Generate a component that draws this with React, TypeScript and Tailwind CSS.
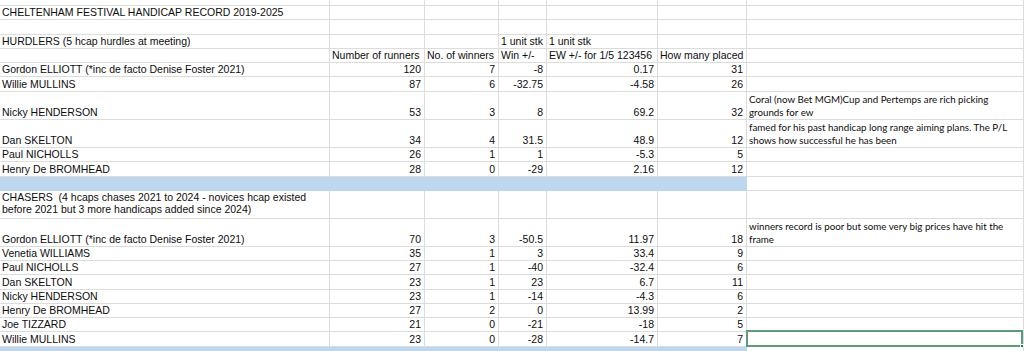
import React from "react";

type Cell = { t?: string; lines?: string[]; r?: boolean; notes?: boolean; wrap?: boolean };
type Row = { h: number; cells: (Cell | null)[]; blue?: boolean; selected?: boolean };

const W = ["w-[330px]", "w-[95px]", "w-[74px]", "w-[48px]", "w-[111px]", "w-[89px]", "w-[277px]"];

const n = (v: string): Cell => ({ t: v, r: true });
const l = (v: string): Cell => ({ t: v });

const dataRow = (h: number, name: string, a: string, b: string, c: string, d: string, e: string, note?: string[]): Row => ({
  h,
  cells: [l(name), n(a), n(b), n(c), n(d), n(e), note ? { lines: note, notes: true } : null],
});

const rows: Row[] = [
  { h: 6, cells: [] },
  { h: 14, cells: [l("CHELTENHAM FESTIVAL HANDICAP RECORD 2019-2025")] },
  { h: 15, cells: [] },
  { h: 14, cells: [l("HURDLERS (5 hcap hurdles at meeting)"), null, null, l("1 unit stk"), l("1 unit stk")] },
  {
    h: 14,
    cells: [null, l("Number of runners"), l("No. of winners"), l("Win +/-"), l("EW +/- for 1/5 123456"), l("How many placed")],
  },
  dataRow(14, "Gordon ELLIOTT (*inc de facto Denise Foster 2021)", "120", "7", "-8", "0.17", "31"),
  dataRow(15, "Willie MULLINS", "87", "6", "-32.75", "-4.58", "26"),
  dataRow(28, "Nicky HENDERSON", "53", "3", "8", "69.2", "32", [
    "Coral (now Bet MGM)Cup and Pertemps are rich picking",
    "grounds for ew",
  ]),
  dataRow(28, "Dan SKELTON", "34", "4", "31.5", "48.9", "12", [
    "famed for his past handicap long range aiming plans. The P/L",
    "shows how successful he has been",
  ]),
  dataRow(14, "Paul NICHOLLS", "26", "1", "1", "-5.3", "5"),
  dataRow(15, "Henry De BROMHEAD", "28", "0", "-29", "2.16", "12"),
  { h: 14, cells: [], blue: true },
  {
    h: 28,
    cells: [
      {
        lines: [
          "CHASERS  (4 hcaps chases 2021 to 2024 - novices hcap existed",
          "before 2021 but 3 more handicaps added since 2024)",
        ],
        wrap: true,
      },
    ],
  },
  dataRow(28, "Gordon ELLIOTT (*inc de facto Denise Foster 2021)", "70", "3", "-50.5", "11.97", "18", [
    "winners record is poor but some very big prices have hit the",
    "frame",
  ]),
  dataRow(14, "Venetia WILLIAMS", "35", "1", "3", "33.4", "9"),
  dataRow(14, "Paul NICHOLLS", "27", "1", "-40", "-32.4", "6"),
  dataRow(15, "Dan SKELTON", "23", "1", "23", "6.7", "11"),
  dataRow(14, "Nicky HENDERSON", "23", "1", "-14", "-4.3", "6"),
  dataRow(14, "Henry De BROMHEAD", "27", "2", "0", "13.99", "2"),
  dataRow(14, "Joe TIZZARD", "21", "0", "-21", "-18", "5"),
  { ...dataRow(15, "Willie MULLINS", "23", "0", "-28", "-14.7", "7"), selected: true },
  { h: 10, cells: [], blue: true },
];

function CellView({ cell, col, row }: { cell: Cell | null; col: number; row: Row }) {
  const blue = row.blue && col < 6;
  const base = `${W[col]} shrink-0 h-full relative flex items-end border-r border-b ${
    blue ? "bg-[#bdd7ee] border-[#bdd7ee]" : "bg-white border-[#dcdcdc]"
  }`;
  const selected = row.selected && col === 6;
  let content: React.ReactNode = null;
  if (cell) {
    if (cell.lines) {
      content = (
        <div
          className={
            cell.notes
              ? "pl-[2px] font-['Lato','Open_Sans',sans-serif] text-[9.75px] leading-[13px] whitespace-pre"
              : "pl-[2px] pb-[3px] text-[10.5px] leading-[12px] whitespace-pre"
          }
        >
          {cell.lines.map((s, i) => (
            <div key={i}>{s}</div>
          ))}
        </div>
      );
    } else {
      content = (
        <div
          className={`w-full text-[10.5px] leading-[13px] whitespace-pre ${
            cell.r ? "text-right pr-[3px]" : "pl-[2px]"
          }`}
        >
          {cell.t}
        </div>
      );
    }
  }
  return (
    <div className={base}>
      {content}
      {selected && (
        <div className="absolute -left-[1px] -top-[2px] right-0 -bottom-[1px] border-2 border-[#5f9b78]">
          <div className="absolute -right-[3px] -bottom-[3px] w-[4px] h-[4px] bg-[#217346] border border-white" />
        </div>
      )}
    </div>
  );
}

export default function App() {
  return (
    <div className="w-[1024px] h-[351px] overflow-hidden bg-white text-[#0d0d0d] font-['Liberation_Sans',Arial,sans-serif]">
      {rows.map((row, ri) => (
        <div key={ri} className="flex" style={{ height: row.h }}>
          {W.map((_, ci) => (
            <CellView key={ci} cell={row.cells[ci] ?? null} col={ci} row={row} />
          ))}
        </div>
      ))}
    </div>
  );
}
